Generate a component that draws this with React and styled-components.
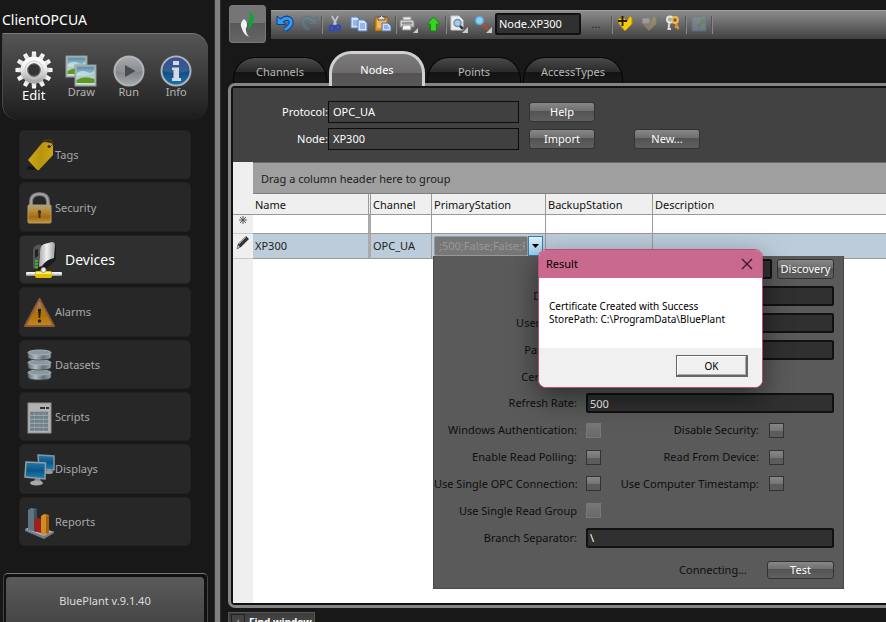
import React from "react";
import styled, { createGlobalStyle, css } from "styled-components";

const GlobalStyle = createGlobalStyle`
  * { box-sizing: border-box; }
  body {
    margin: 0;
    background: #181818;
    color: #fff;
    font: 11px/16px "Noto Sans", "Open Sans", sans-serif;
  }
  button, input { font: inherit; color: inherit; margin: 0; }
`;

/* ---------- shell ---------- */
const Shell = styled.div`
  display: grid;
  grid-template-columns: 214px 7px minmax(0, 1fr);
  height: 100vh;
  overflow: hidden;
`;
const Splitter = styled.div`
  background: #808080;
  border: solid #2c2c2c;
  border-width: 0 1px;
`;

/* ---------- sidebar ---------- */
const Sidebar = styled.aside`
  display: flex;
  flex-direction: column;
  min-width: 0;
`;
const ProjectName = styled.h1`
  margin: 0;
  padding: 10px 2px 3px;
  font-size: 14px;
  line-height: 20px;
  font-weight: 400;
`;
const ModeBar = styled.nav`
  display: flex;
  align-items: flex-start;
  height: 87px;
  margin: 0 6px 0 2px;
  padding: 17px 8px 0 7px;
  border: solid #777;
  border-width: 1px 0 0 1px;
  border-left-color: #4a4a4a;
  border-radius: 0 16px 16px 16px;
  background: linear-gradient(#555, #3a3a3a 50%, #1c1c1c);
`;
const ModeButton = styled.button`
  flex: 1;
  display: flex;
  flex-direction: column;
  align-items: center;
  padding: ${(p) => (p.$active ? "0" : "4px 0 0")};
  border: 0;
  background: none;
  color: ${(p) => (p.$active ? "#fff" : "#b4b4b4")};
  font-size: ${(p) => (p.$active ? "13px" : "11px")};
  line-height: ${(p) => (p.$active ? "12px" : "10px")};
`;
const ModuleList = styled.nav`
  flex: 1;
  display: grid;
  grid-auto-rows: 1fr;
  gap: 3px;
  padding: 10px 23px 27px 19px;
`;
const ModuleButton = styled.button`
  display: flex;
  align-items: center;
  gap: ${(p) => (p.$active ? "3px" : "0")};
  padding: 1px 0 0 4px;
  border: 1px solid #222;
  border-radius: 5px;
  background: ${(p) => (p.$active ? "#2f2f2f" : "#272727")};
  color: ${(p) => (p.$active ? "#fff" : "#a8a8a8")};
  font-size: ${(p) => (p.$active ? "14px" : "11px")};
`;
const Version = styled.footer`
  height: 49px;
  margin: 0 6px 0 3px;
  padding: 3px 3px 0 2px;
  border: 1px solid #444;
  border-top-color: #777;
  border-bottom: 0;
  border-radius: 5px 5px 0 0;
  background: #111;
`;
const VersionFace = styled.div`
  height: 100%;
  display: flex;
  align-items: center;
  justify-content: center;
  padding-top: 2px;
  border-radius: 4px 4px 0 0;
  background: linear-gradient(#5a5a5a, #464646);
  color: #ddd;
`;

/* ---------- main column ---------- */
const Main = styled.main`
  position: relative;
  display: flex;
  flex-direction: column;
  min-width: 0;
  padding-left: 7px;
`;
const Header = styled.header`
  display: flex;
  align-items: center;
  gap: 5px;
  padding: 5px 0 0 1px;
`;
const LogoButton = styled.button`
  width: 37px;
  height: 38px;
  padding: 0;
  border: 1px solid #777;
  border-radius: 3px;
  background: linear-gradient(#757575 47%, #595959 48%, #656565);
  svg { display: block; margin: 0 auto; }
`;
const Toolbar = styled.div`
  flex: 1;
  display: flex;
  align-items: center;
  height: 29px;
  padding-left: 2px;
  border-top: 1px solid #a0a0a0;
  background: linear-gradient(#8c8c8c, #404040);
`;
const Tool = styled.button`
  width: ${(p) => (p.$wide ? "30px" : "24px")};
  height: 26px;
  padding: 0 0 2px;
  border: 0;
  background: none;
  color: #222;
  opacity: ${(p) => (p.disabled ? 0.4 : 1)};
  svg { display: block; margin: 0 auto; }
`;
const Separator = styled.span`
  width: 2px;
  height: 18px;
  border-left: 1px solid #555;
  border-right: 1px solid #888;
`;
const darkField = css`
  border: 2px solid #111;
  border-radius: 2px;
  background: #303030;
  color: #fff;
  outline: 0;
`;
const ToolbarInput = styled.input`
  ${darkField}
  width: 86px;
  height: 22px;
  margin-bottom: 2px;
  padding: 0 2px;
`;

const Tabs = styled.div`
  display: flex;
  align-items: flex-end;
  gap: 2px;
  height: 40px;
  padding-left: 5px;
`;
const Tab = styled.button`
  position: relative;
  width: ${(p) => (p.$wide ? "100px" : "94px")};
  height: 26px;
  padding: 2px 0 0;
  border: 1px solid #060606;
  border-bottom: 0;
  border-radius: 22px 22px 0 0;
  background: linear-gradient(#4a4a4a, #2a2a2a 55%, #141414 56%, #181818);
  color: #b8b8b8;
  line-height: 20px;
  ${(p) =>
    p.$active &&
    css`
      z-index: 1;
      width: 96px;
      height: 35px;
      margin: 0 0 -3px;
      padding: 0;
      border: 3px solid #d0d0d0;
      border-bottom: 0;
      background: linear-gradient(#7c7a7b, #6c6a6b 60%, #545253 61%, #5a5859);
      color: #fff;
    `}
`;
const Panel = styled.section`
  flex: 1;
  min-height: 0;
  display: flex;
  border: 3px solid #858585;
  border-right: 0;
  border-radius: 7px 0 0 7px;
  background: #111;
  padding: 2px 0 2px 2px;
`;
const PanelBody = styled.div`
  flex: 1;
  min-width: 0;
  display: flex;
  flex-direction: column;
  background: #424242;
`;
const Form = styled.form`
  display: grid;
  grid-template-columns: 95px 191px 66px 66px;
  grid-template-rows: 22px 22px;
  align-items: center;
  row-gap: 5px;
  padding: 13px 0 12px;
`;
const FormLabel = styled.label`
  text-align: right;
`;
const FormInput = styled.input`
  width: 100%;
  height: 22px;
  padding: 0 4px 2px;
  border: 1px solid #0c0c0c;
  background: #404040;
  outline: 0;
`;
const FormButton = styled.button`
  height: 20px;
  width: 66px;
  padding: 0;
  border: 1px solid #333;
  border-radius: 3px;
  background: linear-gradient(#888, #6e6e6e 45%, #535353 46%, #606060);
  color: #fff;
  line-height: 16px;
`;
const ActionButton = styled(FormButton)`
  margin-left: ${(p) => (p.$apart ? "49px" : "10px")};
`;

/* ---------- data grid ---------- */
const GridArea = styled.div`
  flex: 1;
  background: linear-gradient(90deg, #efefef 20px, #fff 20px);
`;
const GroupBar = styled.div`
  height: 32px;
  margin-left: 20px;
  padding: 8px;
  border: solid #808080;
  border-width: 1px 0;
  border-top-color: #666;
  background: #9f9f9f;
  color: #1c1c1c;
`;
const Table = styled.table`
  width: 100%;
  table-layout: fixed;
  border-spacing: 0;
  color: #222;
`;
const HeadCell = styled.th`
  width: ${(p) => p.$width || "auto"};
  height: 21px;
  padding: 2px 2px 0;
  border-bottom: 1px solid #999;
  border-right: ${(p) => (p.$locked ? "3px double #999" : p.$last ? "0" : "1px solid #999")};
  background: #efefef;
  color: #111;
  font-weight: 400;
  text-align: left;
`;
const Cell = styled.td`
  position: relative;
  height: ${(p) => (p.$selected ? "25px" : "19px")};
  padding: 0 2px;
  border-bottom: 1px solid #999;
  border-right: ${(p) => (p.$locked ? "3px solid #aaa" : p.$last ? "0" : "1px solid #999")};
  background: ${(p) => (p.$selected ? "#bdccdb" : "#fff")};
`;
const RowMarker = styled.td`
  padding: 0;
  border-bottom: 1px solid #c8c8c8;
  background: #efefef;
  text-align: center;
  vertical-align: top;
  svg { display: block; margin: 0 auto; }
`;
const Combo = styled.div`
  display: flex;
  height: 20px;
`;
const ComboText = styled.input`
  flex: 1;
  min-width: 0;
  padding: 0 2px 0 4px;
  border: 1px solid #999;
  border-radius: 2px;
  background: #777;
  color: #989898;
  outline: 0;
`;
const ComboArrow = styled.button`
  width: 15px;
  padding: 0;
  border: 1px solid #3c7fb1;
  background: linear-gradient(#dff2fc, #9dd3f0);
`;

/* ---------- station editor drop-down ---------- */
const Editor = styled.div`
  position: absolute;
  top: 22px;
  left: 1px;
  z-index: 2;
  width: 411px;
  border: 1px solid #4a4a4a;
  border-top-width: 0;
  background: #5a5a5a;
  color: #0e0e0e;
`;
const EditorRows = styled.div`
  display: grid;
  grid-auto-rows: 1fr;
  height: 295px;
`;
const EditorRow = styled.div`
  display: grid;
  grid-template-columns: 143px 16px minmax(0, 1fr) 16px;
  column-gap: 9px;
  align-items: center;
  padding-right: 9px;
`;
const EditorLabel = styled.label`
  text-align: right;
  white-space: nowrap;
`;
const EditorFields = styled.div`
  grid-column: 2 / -1;
  display: flex;
  gap: 5px;
`;
const EditorInput = styled.input`
  ${darkField}
  flex: 1;
  min-width: 0;
  height: 20px;
  padding: 0 2px;
`;
const Check = styled.input.attrs({ type: "checkbox" })`
  appearance: none;
  width: 15px;
  height: 15px;
  border: 1px solid #333;
  background: linear-gradient(#878787, #757575 50%, #5c5c5c 51%, #5c5c5c);
  &:disabled {
    border-color: #777;
    background: linear-gradient(#787878, #686868);
  }
`;
const CheckPair = styled.div`
  grid-column: 3 / -1;
  display: grid;
  grid-template-columns: minmax(0, 1fr) 15px;
  column-gap: 10px;
  align-items: center;
  padding-right: 50px;
`;
const EditorFooter = styled.div`
  display: flex;
  align-items: center;
  justify-content: flex-end;
  gap: 20px;
  height: 37px;
  padding-right: 9px;
`;
const EditorButton = styled(FormButton)`
  width: ${(p) => (p.$small ? "57px" : "67px")};
  height: ${(p) => (p.$small ? "20px" : "18px")};
`;

/* ---------- message box ---------- */
const Dialog = styled.div`
  position: absolute;
  top: 249px;
  left: 317px;
  z-index: 3;
  width: 225px;
  overflow: hidden;
  border: 1px solid #b8507a;
  border-radius: 8px;
  background: #fff;
  color: #000;
  box-shadow: 0 10px 28px rgba(0, 0, 0, 0.5);
`;
const DialogTitle = styled.div`
  display: flex;
  align-items: center;
  justify-content: space-between;
  height: 28px;
  padding: 0 8px 0 7px;
  background: #c9698d;
`;
const CloseButton = styled.button`
  width: 14px;
  height: 14px;
  padding: 0;
  border: 0;
  background: none;
  svg { display: block; }
`;
const DialogText = styled.p`
  height: 70px;
  margin: 0;
  padding: 22px 10px 0;
  font-size: 10px;
  line-height: 13px;
`;
const DialogFooter = styled.div`
  display: flex;
  justify-content: flex-end;
  padding: 7px 14px 10px;
  background: #f0f0f0;
`;
const OkButton = styled.button`
  width: 72px;
  height: 22px;
  padding: 0;
  border: 1px solid #666;
  border-right-width: 2px;
  border-bottom-width: 2px;
  background: #f0f0f0;
  box-shadow: inset 1px 1px #fff, inset -1px -1px #aaa;
  font-size: 10px;
`;

const BottomStrip = styled.footer`
  height: 14px;
  padding-top: 4px;
  overflow: hidden;
`;
const FindTab = styled.button`
  display: flex;
  align-items: flex-start;
  gap: 4px;
  height: 24px;
  padding: 1px 2px 0;
  border: 1px solid #555;
  background: linear-gradient(#3c3c3c, #555);
  color: #fff;
  font-size: 10px;
  font-weight: 700;
  line-height: 16px;
  white-space: nowrap;
`;
const FindMark = styled.span`
  width: 14px;
  height: 16px;
  border: 1px solid #222;
  background: #444;
  color: #aaa;
  line-height: 14px;
`;

/* ---------- drawings ---------- */
function Drawing({ w, h = w, children }) {
  return (
    <svg width={w} height={h} viewBox={`0 0 ${w} ${h}`} aria-hidden="true">
      {children}
    </svg>
  );
}
function Gradient({ id, stops, flat }) {
  return (
    <linearGradient id={id} x1="0" y1="0" x2={flat ? 1 : 0} y2={flat ? 0 : 1}>
      {stops.map((c, i) => (
        <stop key={i} offset={i / (stops.length - 1)} stopColor={c} />
      ))}
    </linearGradient>
  );
}

const GearIcon = () => (
  <Drawing w={38}>
    <defs><Gradient id="gear" stops={["#fff", "#e4e4e4", "#aaa"]} /></defs>
    {Array.from({ length: 12 }, (_, i) => (
      <path key={i} d="M16.4 9 L17 0.5 H21 L21.6 9Z" fill="url(#gear)" transform={`rotate(${i * 30} 19 19)`} />
    ))}
    <circle cx="19" cy="19" r="10" fill="none" stroke="url(#gear)" strokeWidth="7" />
    <circle cx="19" cy="19" r="9" fill="none" stroke="#c8c8c8" strokeWidth="1" />
    <circle cx="19" cy="19" r="6.3" fill="#333" stroke="#777" />
  </Drawing>
);
const PictureIcon = () => (
  <Drawing w={32}>
    <defs><Gradient id="sky" stops={["#568da6", "#a9c9d0", "#d6e0df"]} /></defs>
    {[[1, 1], [10, 10]].map(([x, y]) => (
      <g key={x} transform={`translate(${x} ${y})`}>
        <rect width="21" height="21" fill="#b8c0c0" stroke="#8e9696" />
        <rect x="1.5" y="1.5" width="18" height="18" fill="url(#sky)" />
        <path d="M2 8 Q7 4 12 7 T19 5 V9 Q11 11 2 11Z" fill="#d4e4e6" opacity=".7" />
        <path d="M1.5 15 Q9 10 19.5 14 V18 H1.5Z" fill="#5d9a20" />
      </g>
    ))}
  </Drawing>
);
const PlayIcon = () => (
  <Drawing w={32}>
    <defs><Gradient id="play" stops={["#9b9da0", "#7e8184", "#a7aaac"]} /></defs>
    <circle cx="16" cy="16" r="14.5" fill="url(#play)" stroke="#aeb3b5" strokeWidth="2" />
    <path d="M2 16 a14 14 0 0 1 28 0 Q16 20 2 16Z" fill="#fff" opacity=".12" />
    <path d="M12 10 L22.5 16 L12 22Z" fill="#484c52" />
  </Drawing>
);
const InfoIcon = () => (
  <Drawing w={32}>
    <defs><Gradient id="info" stops={["#27348a", "#174880", "#1675b4"]} /></defs>
    <circle cx="16" cy="16" r="14.5" fill="url(#info)" stroke="#a9b3b9" strokeWidth="2" />
    <path d="M3 16 a13 13 0 0 1 26 0 Q16 20 3 16Z" fill="#fff" opacity=".12" />
    <path d="M13 6 H19 V10 H13Z M12 12.5 H19 V23 H21 V26 H12 V23 H13.5 V15 H12Z" fill="#d5dbdf" />
  </Drawing>
);

const TagIcon = () => (
  <Drawing w={31} h={34}>
    <defs><Gradient id="tag" stops={["#cda814", "#b8950c", "#c8a418"]} flat /></defs>
    <ellipse cx="10" cy="30" rx="8" ry="2" fill="#161616" />
    <path d="M4 22 L18 5 Q19 4 21 4 L27 5 Q29 6 29 8 L29 17 L15 32 Q14 33 12 31Z" fill="url(#tag)" />
    <path d="M18 5 Q23 0 28 3 Q30 7 26 9" fill="none" stroke="#6b4416" />
    <circle cx="25" cy="8.5" r="1.5" fill="#3a2a06" />
  </Drawing>
);
const LockIcon = () => (
  <Drawing w={31} h={34}>
    <defs><Gradient id="lock" stops={["#aaa28c", "#b98c36", "#a06b12", "#c5943a"]} /></defs>
    <path d="M7 17 V11 Q7 3 15.5 3 T24 11 V17" fill="none" stroke="#777" strokeWidth="4" />
    <path d="M7 17 V11 Q7 3 15.5 3 T24 11 V17" fill="none" stroke="#aaa" strokeWidth="1.5" />
    <rect x="4" y="14" width="23" height="18" rx="1" fill="url(#lock)" stroke="#b29a65" />
    <path d="M15.5 19 a2 2 0 0 1 1 3.5 V27 h-2 V22.5 a2 2 0 0 1 1-3.5" fill="#41310f" />
  </Drawing>
);
const DeviceIcon = () => (
  <Drawing w={38}>
    <defs>
      <Gradient id="dev" stops={["#a8a8a8", "#f0f0f0", "#9a9a9a"]} flat />
      <Gradient id="wire" stops={["#fff", "#ddd", "#888"]} />
    </defs>
    <path d="M9 9 Q9 5 13 4 L28 1 Q32 1 32 5 V19 L21 29 H12 Q9 29 9 26Z" fill="#1c1c1c" />
    <path d="M16 7 Q17 4 20 3 L28 1 Q31 1 31 4 L30 17 Q23 18 18 25 L15 26Z" fill="url(#dev)" />
    <path d="M9 9 Q9 5 13 4 L17 3 L14 28 Q9 29 9 26Z" fill="#555" />
    <path d="M11 9 L14 8 V15 L11 17Z" fill="#222" />
    <path d="M12.5 19 V27" stroke="#36b52a" strokeWidth="3" strokeDasharray="2 1" />
    <rect x="2" y="31" width="36" height="4" rx="1" fill="url(#wire)" />
    <rect x="11" y="30" width="17" height="7" rx="2" fill="#e7bd00" />
    <rect x="12" y="31" width="15" height="2" fill="#fff16a" />
    <circle cx="19.5" cy="29" r="2.5" fill="#eee" stroke="#999" />
  </Drawing>
);
const AlarmIcon = () => (
  <Drawing w={31} h={34}>
    <defs><Gradient id="alarm" stops={["#9d9488", "#a47126", "#b17507", "#c48a20"]} /></defs>
    <path d="M15.5 4 L30 31 H1Z" fill="url(#alarm)" stroke="#8b5a3c" strokeWidth="2" strokeLinejoin="round" />
    <path d="M14 14 h3 l-.8 9 h-1.4Z" fill="#221a0c" />
    <circle cx="15.5" cy="26" r="1.7" fill="#221a0c" />
  </Drawing>
);
const DatasetIcon = () => (
  <Drawing w={31} h={34}>
    <defs><Gradient id="disk" stops={["#66727c", "#b0bac0", "#65717b", "#9aa5ad"]} flat /></defs>
    {[22, 12, 2].map((y) => (
      <g key={y}>
        <path d={`M4 ${y + 2} V${y + 7} Q4 ${y + 10} 15.5 ${y + 10} T27 ${y + 7} V${y + 2}Z`} fill="url(#disk)" stroke="#3c464e" strokeWidth=".7" />
        <ellipse cx="15.5" cy={y + 2.5} rx="11.5" ry="2.5" fill="#8c989f" stroke="#a8b2b8" />
      </g>
    ))}
  </Drawing>
);
const ScriptIcon = () => (
  <Drawing w={31} h={34}>
    <rect x="4" y="3" width="23" height="30" fill="#b2b2b2" stroke="#8e8e8e" />
    <path d="M16 8 h5 m1 0 h3" stroke="#333" strokeWidth="2" />
    {[0, 1, 2, 3, 4].map((r) =>
      [0, 1, 2, 3].map((c) => (
        <rect key={`${r}-${c}`} x={6.5 + c * 4.6} y={12 + r * 4} width="3.6" height="2.6" fill="#718794" stroke="#5f717c" strokeWidth=".5" />
      ))
    )}
  </Drawing>
);
const DisplayIcon = () => (
  <Drawing w={31} h={34}>
    <defs><Gradient id="screen" stops={["#2679aa", "#0a5688", "#1c83b8"]} /></defs>
    <ellipse cx="25" cy="20" rx="4" ry="2" fill="#999" />
    <path d="M14 3 L30 4 V18 L15 17Z" fill="url(#screen)" stroke="#87949c" strokeWidth="1.5" />
    <path d="M11 27 h5 l2 4 h-9Z" fill="#888" />
    <ellipse cx="12.5" cy="31" rx="6.5" ry="2.5" fill="#a8a8a8" />
    <path d="M2 10 L21.5 11 L21 27 L1 25Z" fill="url(#screen)" stroke="#929da4" strokeWidth="1.5" />
  </Drawing>
);
const ReportIcon = () => (
  <Drawing w={31} h={34}>
    <path d="M1 24 L11 20 L30 27 L20 33Z" fill="#a9b0b5" />
    <path d="M1 24 L20 31 L30 26 V28 L20 34 L1 26Z" fill="#727b82" />
    <path d="M4 5 L7 3 L13 4 V27 L4 25Z" fill="#5f7482" />
    <path d="M10 5 L13 4 V27 L10 26Z" fill="#3c505d" />
    <path d="M10 15 L13 13 L17 14 V28 L10 26Z" fill="#9c201c" />
    <path d="M17 11 L20 9 L25 10 V28 L20 30 L17 29Z" fill="#d18b22" />
    <path d="M22 11 L25 10 V28 L22 29Z" fill="#a6600c" />
  </Drawing>
);

const LogoIcon = () => (
  <Drawing w={18} h={28}>
    <path d="M5 9 Q0 13 3 19 Q5 25 10 27 Q6 22 7 18 Q10 13 5 9Z" fill="#f2f2f2" />
    <path d="M9 1 Q17 5 14 12 Q13 17 8 20 Q11 15 9 11 Q13 6 9 1Z" fill="#0ca536" />
  </Drawing>
);
const UndoIcon = ({ flip, color = "#2f9bf5", edge = "#0a3f96" }) => (
  <Drawing w={18} h={17}>
    <g transform={flip ? "translate(18 0) scale(-1 1)" : undefined} fill="none">
      <path d="M5 6 Q11 1 14.5 5 Q17 10 9 14.500" stroke={edge} strokeWidth="5" />
      <path d="M1 1 V9.500 H10Z" fill={color} stroke={edge} strokeLinejoin="round" />
      <path d="M5 6 Q11 1 14.5 5 Q17 10 9 14.500" stroke={color} strokeWidth="3" />
    </g>
  </Drawing>
);
const CutIcon = () => (
  <Drawing w={14} h={17}>
    <path d="M4 1 L8.5 10 M10 1 L5.5 10" stroke="#bfc4d0" strokeWidth="1.7" />
    <circle cx="4" cy="13" r="2.4" fill="none" stroke="#3044c8" strokeWidth="2" />
    <circle cx="10" cy="12.5" r="2.2" fill="none" stroke="#3044c8" strokeWidth="2" />
  </Drawing>
);
const CopyIcon = () => (
  <Drawing w={18} h={16}>
    {[[1, 1], [8, 4]].map(([x, y]) => (
      <g key={x} transform={`translate(${x} ${y})`}>
        <path d="M0 0 H6 L9 3 V11 H0Z" fill="#d4e4fa" stroke="#5d83c6" />
        <path d="M2 4 H7 M2 6 H7 M2 8 H7" stroke="#5a86d0" />
      </g>
    ))}
  </Drawing>
);
const PasteIcon = () => (
  <Drawing w={18} h={17}>
    <rect x="1" y="2" width="13" height="14" rx="1" fill="#d89327" stroke="#8b5413" />
    <rect x="3" y="4" width="9" height="9" fill="#f0bc56" />
    <path d="M4 4 V2 H6 Q7.5 -1 9 2 H11 V5 H4Z" fill="#ddd" stroke="#555" />
    <path d="M8 8 H14 L17 11 V16 H8Z" fill="#c9dcf8" stroke="#466fae" />
    <path d="M10 11 h4 m-4 2 h5" stroke="#5a86d0" />
  </Drawing>
);
const PrintIcon = () => (
  <Drawing w={20} h={18}>
    <path d="M4 2 H12 V6 H4Z" fill="#eee" stroke="#999" />
    <path d="M1 6 Q1 5 3 5 H13 Q15 5 15 7 V12 H1Z" fill="#d0d0d0" stroke="#888" />
    <path d="M3 8 H13" stroke="#555" />
    <path d="M4 10 H12 V15 H3Z" fill="#f6f6f6" stroke="#888" />
    <path d="M19 13 V18 H14Z" fill="#ccc" />
  </Drawing>
);
const UpIcon = () => (
  <Drawing w={15} h={16}>
    <path d="M7.5 1 L14 8 H10.5 V15 H4.5 V8 H1Z" fill="#36d321" stroke="#108808" strokeLinejoin="round" />
  </Drawing>
);
const PreviewIcon = () => (
  <Drawing w={18} h={18}>
    <path d="M1 1 H9 L13 5 V15 H1Z" fill="#eee" stroke="#ccc" />
    <circle cx="7.5" cy="8" r="3.5" fill="#a9cde8" stroke="#6f92ad" strokeWidth="1.5" />
    <path d="M10 11 L13 14" stroke="#2f3a44" strokeWidth="2.5" />
    <path d="M18 12 V18 H12Z" fill="#ccc" />
  </Drawing>
);
const SearchIcon = () => (
  <Drawing w={18} h={18}>
    <path d="M8 8 L13 13.500" stroke="#c4432c" strokeWidth="2.500" strokeLinecap="round" />
    <circle cx="5.5" cy="5.5" r="4" fill="#8fd0f2" stroke="#59a5d1" strokeWidth="1.5" />
    <path d="M18 12 V18 H12Z" fill="#ccc" />
  </Drawing>
);
const AddTagIcon = ({ plain }) => (
  <Drawing w={16} h={17}>
    <path d="M1 4 L7 3 L10 6 L13 1 L15 3 V9 L8 16 L2 9Z" fill={plain ? "#c8b46c" : "#f6cc13"} stroke={plain ? "#a09468" : "#b48c04"} />
    {plain ? (
      <rect x="1" y="3" width="8" height="6" fill="#ddd" stroke="#888" />
    ) : (
      <path d="M5.5 1 V11 M1 6 H10" stroke="#2a2205" strokeWidth="2" />
    )}
  </Drawing>
);
const KeysIcon = () => (
  <Drawing w={16} h={17}>
    <path d="M4.500 7 L3.500 14 L6 14" fill="none" stroke="#ddd" strokeWidth="2" />
    <circle cx="5" cy="4.5" r="3" fill="#aaa" stroke="#e6e6e6" strokeWidth="2" />
    <path d="M10 7 L13.500 14 M12 11 L10 12.500" fill="none" stroke="#e0962c" strokeWidth="2.2" />
    <circle cx="10" cy="5" r="2.800" fill="#8a5a1a" stroke="#f0b857" strokeWidth="2.2" />
  </Drawing>
);
const ExportIcon = () => (
  <Drawing w={16} h={16}>
    <rect x="1" y="1" width="14" height="14" fill="#8fa6b8" stroke="#5f83b0" />
    <path d="M8 3 H14 V9 L12 7 L8 12 L6 9 L10 5Z" fill="#59b052" />
  </Drawing>
);
const CloseIcon = () => (
  <Drawing w={14}>
    <path d="M2 2 L12 12 M12 2 L2 12" stroke="#3a1626" strokeWidth="1.3" />
  </Drawing>
);
const ArrowIcon = () => (
  <Drawing w={13} h={8}>
    <path d="M3 2 H10 L6.5 6Z" fill="#000" />
  </Drawing>
);
const StarIcon = () => (
  <Drawing w={10}>
    <path d="M5 1 V9 M1 5 H9 M2 2 L8 8 M8 2 L2 8" stroke="#555" />
  </Drawing>
);
const PencilIcon = () => (
  <Drawing w={14} h={16}>
    <path d="M1 15 L2 10 L10 2 L13 5 L5 13Z" fill="#333" />
    <path d="M3 10 L10 3" stroke="#aaa" />
    <path d="M1 15 L2 11 L4 13Z" fill="#ddd" stroke="#444" strokeWidth=".5" />
  </Drawing>
);

/* ---------- content ---------- */
const modes = [
  ["Edit", GearIcon],
  ["Draw", PictureIcon],
  ["Run", PlayIcon],
  ["Info", InfoIcon],
];
const modules = [
  ["Tags", TagIcon],
  ["Security", LockIcon],
  ["Devices", DeviceIcon],
  ["Alarms", AlarmIcon],
  ["Datasets", DatasetIcon],
  ["Scripts", ScriptIcon],
  ["Displays", DisplayIcon],
  ["Reports", ReportIcon],
];
const checks = [
  ["Windows Authentication:", true, "Disable Security:"],
  ["Enable Read Polling:", false, "Read From Device:"],
  ["Use Single OPC Connection:", false, "Use Computer Timestamp:"],
  ["Use Single Read Group", true, null],
];

function TextRow({ id, label, value = "" }) {
  return (
    <EditorRow>
      <EditorLabel htmlFor={id}>{label}</EditorLabel>
      <EditorFields>
        <EditorInput id={id} defaultValue={value} />
      </EditorFields>
    </EditorRow>
  );
}

function StationEditor() {
  return (
    <Editor>
      <EditorRows>
        <EditorRow>
          <span />
          <EditorFields>
            <EditorInput aria-label="Service" />
            <EditorButton type="button" $small>Discovery</EditorButton>
          </EditorFields>
        </EditorRow>
        <TextRow id="domain" label="Domain:" />
        <TextRow id="user" label="User Name:" />
        <TextRow id="password" label="Password:" />
        <EditorRow>
          <EditorLabel as="span">Certificate:</EditorLabel>
        </EditorRow>
        <TextRow id="rate" label="Refresh Rate:" value="500" />
        {checks.map(([label, disabled, other], i) => (
          <EditorRow key={label}>
            <EditorLabel htmlFor={`left-${i}`}>{label}</EditorLabel>
            <Check id={`left-${i}`} disabled={disabled} />
            {other && (
              <CheckPair>
                <EditorLabel htmlFor={`right-${i}`}>{other}</EditorLabel>
                <Check id={`right-${i}`} />
              </CheckPair>
            )}
          </EditorRow>
        ))}
        <TextRow id="branch" label="Branch Separator:" value="\" />
      </EditorRows>
      <EditorFooter>
        <span>Connecting...</span>
        <EditorButton type="button">Test</EditorButton>
      </EditorFooter>
    </Editor>
  );
}

function DataGrid() {
  return (
    <GridArea>
      <GroupBar>Drag a column header here to group</GroupBar>
      <Table>
        <thead>
          <tr>
            <HeadCell $width="20px" $last aria-label="Row state" />
            <HeadCell $width="118px" $locked>Name</HeadCell>
            <HeadCell $width="61px">Channel</HeadCell>
            <HeadCell $width="114px">PrimaryStation</HeadCell>
            <HeadCell $width="107px">BackupStation</HeadCell>
            <HeadCell $last>Description</HeadCell>
          </tr>
        </thead>
        <tbody>
          <tr>
            <RowMarker><StarIcon /></RowMarker>
            <Cell $locked />
            <Cell />
            <Cell />
            <Cell />
            <Cell $last />
          </tr>
          <tr>
            <RowMarker><PencilIcon /></RowMarker>
            <Cell $selected $locked>XP300</Cell>
            <Cell $selected>OPC_UA</Cell>
            <Cell $selected>
              <Combo>
                <ComboText aria-label="PrimaryStation" defaultValue=";500;False;False;False" />
                <ComboArrow type="button" aria-label="Open"><ArrowIcon /></ComboArrow>
              </Combo>
              <StationEditor />
            </Cell>
            <Cell $selected />
            <Cell $selected $last />
          </tr>
        </tbody>
      </Table>
    </GridArea>
  );
}

function ResultDialog() {
  return (
    <Dialog role="dialog" aria-label="Result">
      <DialogTitle>
        <span>Result</span>
        <CloseButton type="button" aria-label="Close"><CloseIcon /></CloseButton>
      </DialogTitle>
      <DialogText>
        Certificate Created with Success
        <br />
        StorePath: C:\ProgramData\BluePlant
      </DialogText>
      <DialogFooter>
        <OkButton type="button">OK</OkButton>
      </DialogFooter>
    </Dialog>
  );
}

export default function App() {
  return (
    <>
      <GlobalStyle />
      <Shell>
        <Sidebar>
          <ProjectName>ClientOPCUA</ProjectName>
          <ModeBar>
            {modes.map(([name, Icon], i) => (
              <ModeButton key={name} type="button" $active={i === 0}>
                <Icon />
                {name}
              </ModeButton>
            ))}
          </ModeBar>
          <ModuleList>
            {modules.map(([name, Icon]) => (
              <ModuleButton key={name} type="button" $active={name === "Devices"}>
                <Icon />
                {name}
              </ModuleButton>
            ))}
          </ModuleList>
          <Version><VersionFace>BluePlant v.9.1.40</VersionFace></Version>
        </Sidebar>
        <Splitter />
        <Main>
          <Header>
            <LogoButton type="button" aria-label="Home"><LogoIcon /></LogoButton>
            <Toolbar>
              <Tool aria-label="Undo"><UndoIcon /></Tool>
              <Tool aria-label="Redo" disabled><UndoIcon flip color="#5b89a5" edge="#3d6a88" /></Tool>
              <Separator />
              <Tool aria-label="Cut"><CutIcon /></Tool>
              <Tool aria-label="Copy"><CopyIcon /></Tool>
              <Tool aria-label="Paste"><PasteIcon /></Tool>
              <Separator />
              <Tool aria-label="Print"><PrintIcon /></Tool>
              <Tool aria-label="Up"><UpIcon /></Tool>
              <Separator />
              <Tool aria-label="Preview"><PreviewIcon /></Tool>
              <Tool aria-label="Search"><SearchIcon /></Tool>
              <ToolbarInput aria-label="Object" defaultValue="Node.XP300" />
              <Tool $wide>...</Tool>
              <Separator />
              <Tool aria-label="New tag"><AddTagIcon /></Tool>
              <Tool aria-label="Edit tag" disabled><AddTagIcon plain /></Tool>
              <Tool aria-label="Keys"><KeysIcon /></Tool>
              <Separator />
              <Tool aria-label="Export" disabled><ExportIcon /></Tool>
              <Separator />
            </Toolbar>
          </Header>
          <Tabs role="tablist">
            <Tab role="tab">Channels</Tab>
            <Tab role="tab" aria-selected="true" $active>Nodes</Tab>
            <Tab role="tab">Points</Tab>
            <Tab role="tab" $wide>AccessTypes</Tab>
          </Tabs>
          <Panel>
            <PanelBody>
              <Form onSubmit={(e) => e.preventDefault()}>
                <FormLabel htmlFor="protocol">Protocol:</FormLabel>
                <FormInput id="protocol" defaultValue="OPC_UA" />
                <ActionButton type="button">Help</ActionButton>
                <span />
                <FormLabel htmlFor="node">Node:</FormLabel>
                <FormInput id="node" defaultValue="XP300" />
                <ActionButton type="button">Import</ActionButton>
                <ActionButton type="button" $apart>New...</ActionButton>
              </Form>
              <DataGrid />
            </PanelBody>
          </Panel>
          <BottomStrip>
            <FindTab type="button"><FindMark>+</FindMark>Find window</FindTab>
          </BottomStrip>
          <ResultDialog />
        </Main>
      </Shell>
    </>
  );
}
